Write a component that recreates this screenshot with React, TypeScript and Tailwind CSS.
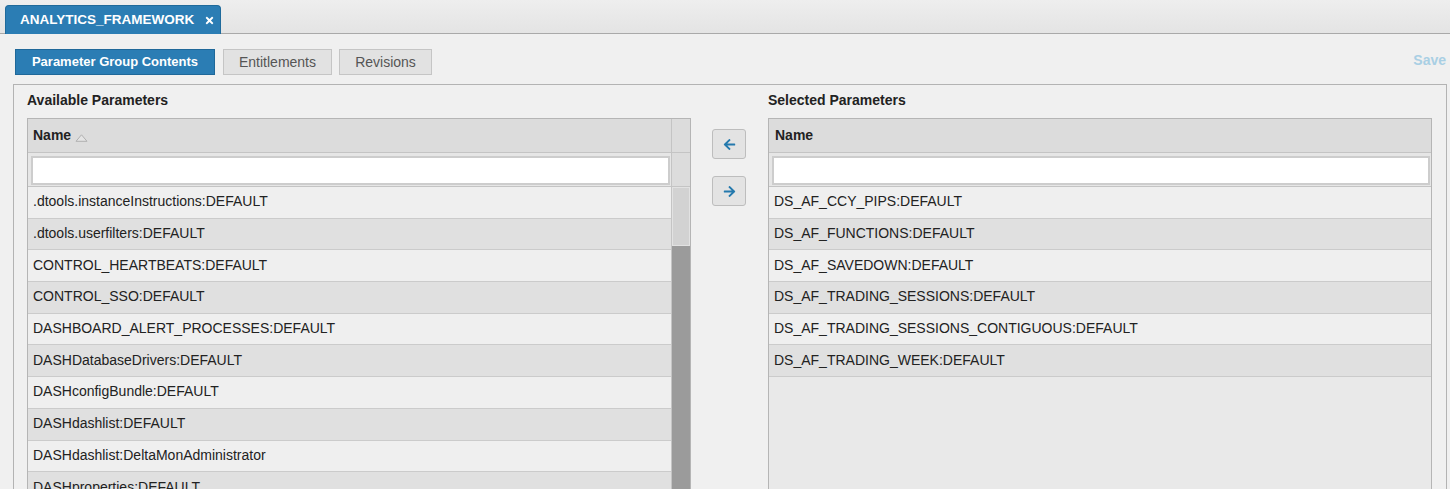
import { FaArrowLeft, FaArrowRight, FaTimes } from 'react-icons/fa'

const available = [
  '.dtools.instanceInstructions:DEFAULT',
  '.dtools.userfilters:DEFAULT',
  'CONTROL_HEARTBEATS:DEFAULT',
  'CONTROL_SSO:DEFAULT',
  'DASHBOARD_ALERT_PROCESSES:DEFAULT',
  'DASHDatabaseDrivers:DEFAULT',
  'DASHconfigBundle:DEFAULT',
  'DASHdashlist:DEFAULT',
  'DASHdashlist:DeltaMonAdministrator',
  'DASHproperties:DEFAULT',
  'DASHsecurity:DEFAULT',
]

const selected = [
  'DS_AF_CCY_PIPS:DEFAULT',
  'DS_AF_FUNCTIONS:DEFAULT',
  'DS_AF_SAVEDOWN:DEFAULT',
  'DS_AF_TRADING_SESSIONS:DEFAULT',
  'DS_AF_TRADING_SESSIONS_CONTIGUOUS:DEFAULT',
  'DS_AF_TRADING_WEEK:DEFAULT',
]

function Row({ label, i }: { label: string; i: number }) {
  return (
    <div
      className={`h-[31.7px] shrink-0 flex items-center pl-[5px] pb-[1px] border-b border-[#cbcbcb] text-[14px] text-[#222] whitespace-nowrap ${
        i % 2 === 0 ? 'bg-[#efefef]' : 'bg-[#e0e0e0]'
      }`}
    >
      {label}
    </div>
  )
}

function FilterInput() {
  return (
    <div className="h-[34px] border-b border-[#c4c4c4] bg-[#e6e6e6] pl-[3px] pr-[1px] py-[3px] flex-1">
      <div className="h-[29px] bg-white border-2 border-[#cdcdcd]" />
    </div>
  )
}

export default function App() {
  return (
    <div className="w-[1450px] h-[489px] overflow-hidden bg-[#f0f0f0] font-['Liberation_Sans',Arial,sans-serif] text-[#222]">
      {/* tab strip */}
      <div className="h-[34px] border-b border-[#a9a9a9] bg-gradient-to-b from-[#eeeeee] to-[#e4e4e4] pl-[5px] pt-[5px] flex">
        <div className="h-[29px] w-[216px] rounded-t-[4px] bg-[#2b7db4] border border-b-0 border-[#1f6a9b] flex items-center pl-[14px] gap-[10px] text-white text-[13.5px] font-bold">
          ANALYTICS_FRAMEWORK
          <FaTimes size={11} />
        </div>
      </div>

      {/* toolbar */}
      <div className="flex items-center pl-[15px] pr-[4px] pt-[15px]">
        <button className="h-[26px] w-[200px] bg-[#2b7db4] border border-[#1f6899] text-white text-[13px] font-bold">
          Parameter Group Contents
        </button>
        <button className="ml-[8px] h-[26px] w-[109px] bg-[#e2e2e2] border border-[#c5c5c5] text-[#555] text-[14px]">
          Entitlements
        </button>
        <button className="ml-[7px] h-[26px] w-[93px] bg-[#e2e2e2] border border-[#c5c5c5] text-[#555] text-[14px]">
          Revisions
        </button>
        <span className="ml-auto -mt-[3px] text-[14px] font-bold text-[#a9cfe4]">Save</span>
      </div>

      {/* main panel */}
      <div className="mt-[9px] ml-[13px] w-[1434px] h-[420px] border border-[#b3b3b3] pl-[13px] pt-[7px]">
        <div className="grid grid-cols-[664px_77px_664px]">
          <div className="h-[16px] leading-[16px] text-[14px] font-bold mb-[10px]">Available Parameters</div>
          <div />
          <div className="h-[16px] leading-[16px] text-[14px] font-bold mb-[10px]">Selected Parameters</div>

          {/* left table */}
          <div className="h-[380px] border border-[#b5b5b5] flex flex-col">
            <div className="flex">
              <div className="flex-1 h-[34px] bg-[#dcdcdc] border-b border-[#c4c4c4] flex items-center pl-[5px] gap-[4px] text-[14px] font-bold">
                Name
                <svg width="13" height="8" viewBox="0 0 13 8" className="mt-[4px]">
                  <path d="M6.5 0.8 L12 7.3 L1 7.3 Z" fill="#e4e4e4" stroke="#b0b0b0" strokeWidth="1" />
                </svg>
              </div>
              <div className="w-[19px] h-[34px] bg-[#dcdcdc] border-l border-b border-[#c4c4c4]" />
            </div>
            <div className="flex">
              <FilterInput />
              <div className="w-[19px] h-[34px] bg-[#dcdcdc] border-l border-b border-[#c4c4c4]" />
            </div>
            <div className="flex flex-1 min-h-0">
              <div className="flex-1 flex flex-col overflow-hidden">
                {available.map((a, i) => (
                  <Row key={a} label={a} i={i} />
                ))}
              </div>
              <div className="w-[19px] border-l border-[#c4c4c4] flex flex-col">
                <div className="h-[59px] bg-[#d2d2d2] border border-[#e2e2e2]" />
                <div className="flex-1 bg-[#9b9b9b]" />
              </div>
            </div>
          </div>

          {/* move buttons */}
          <div className="flex flex-col pl-[21px] pt-[11px] gap-[17px]">
            <button className="w-[34px] h-[30px] rounded-[3px] bg-[#e3e3e3] border border-[#bdbdbd] flex items-center justify-center text-[#2479ad]">
              <FaArrowLeft size={13} />
            </button>
            <button className="w-[34px] h-[30px] rounded-[3px] bg-[#e3e3e3] border border-[#bdbdbd] flex items-center justify-center text-[#2479ad]">
              <FaArrowRight size={13} />
            </button>
          </div>

          {/* right table */}
          <div className="h-[380px] border border-[#b5b5b5] bg-[#e9e9e9] flex flex-col">
            <div className="h-[34px] bg-[#dcdcdc] border-b border-[#c4c4c4] flex items-center pl-[6px] text-[14px] font-bold">
              Name
            </div>
            <div className="flex">
              <FilterInput />
            </div>
            {selected.map((s, i) => (
              <Row key={s} label={s} i={i} />
            ))}
          </div>
        </div>
      </div>
    </div>
  )
}
